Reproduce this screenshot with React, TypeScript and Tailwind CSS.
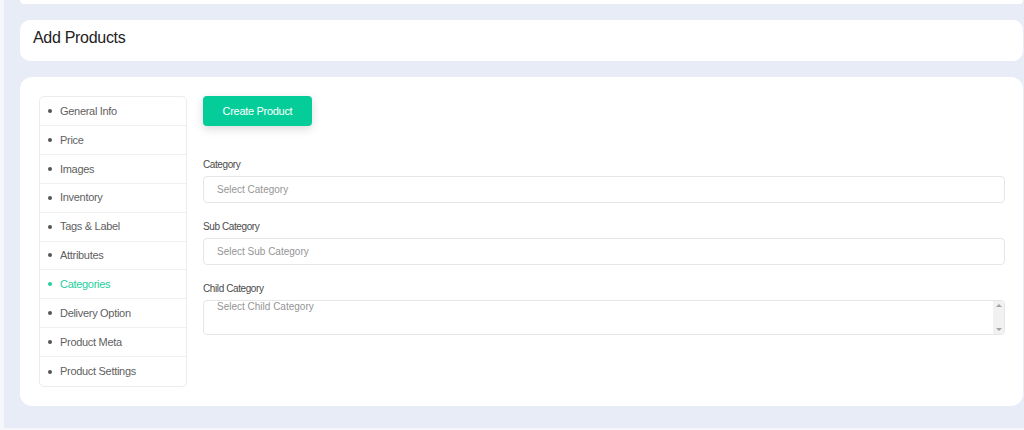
import React from "react";

const items = [
  "General Info",
  "Price",
  "Images",
  "Inventory",
  "Tags & Label",
  "Attributes",
  "Categories",
  "Delivery Option",
  "Product Meta",
  "Product Settings",
];

export default function App() {
  return (
    <div
      className="w-[1024px] h-[430px] overflow-hidden bg-[#f6f7fb]"
      style={{ fontFamily: '"Liberation Sans", Arial, sans-serif' }}
    >
      <div className="ml-[4px] h-[428px] bg-[#e8ecf7] pl-[16px] pr-[1px] flex flex-col gap-[16px]">
        <div className="h-[4px] bg-white rounded-b-[10px]" />
        <div className="h-[41px] bg-white rounded-[10px] flex items-center px-[13px] pb-[5px]">
          <h1 className="text-[16px] text-[#222] tracking-[-0.3px]">Add Products</h1>
        </div>
        <div className="h-[329px] bg-white rounded-[12px] pt-[19px] pl-[19px] pr-[18px] flex gap-[16px]">
          <ul className="w-[148px] h-[291px] border border-[#ececec] rounded-[5px] flex flex-col">
            {items.map((it, i) => {
              const active = it === "Categories";
              return (
                <li
                  key={it}
                  className={`h-[29px] flex items-center pl-[8px] text-[11px] tracking-[-0.3px] ${
                    i < items.length - 1 ? "border-b border-[#f0f0f0]" : ""
                  } ${active ? "text-[#22cf9d]" : "text-[#5f5f5f]"}`}
                >
                  <span
                    className={`w-[4px] h-[4px] rounded-full mr-[8px] ${
                      active ? "bg-[#22cf9d]" : "bg-[#555]"
                    }`}
                  />
                  {it}
                </li>
              );
            })}
          </ul>
          <div className="flex-1 flex flex-col">
            <div>
              <button className="w-[109px] h-[30px] rounded-[4px] bg-[#05cd99] text-white text-[11px] tracking-[-0.3px] shadow-[0_3px_10px_rgba(0,0,0,0.15)]">
                Create Product
              </button>
            </div>
            <label className="mt-[33px] text-[10px] tracking-[-0.4px] text-[#4a4a4a] leading-[12px]">Category</label>
            <div className="mt-[5px] h-[27px] border border-[#e6e6e6] rounded-[4px] flex items-center pl-[13px] text-[10px] text-[#959595]">
              Select Category
            </div>
            <label className="mt-[18px] text-[10px] tracking-[-0.4px] text-[#4a4a4a] leading-[12px]">Sub Category</label>
            <div className="mt-[5px] h-[27px] border border-[#e6e6e6] rounded-[4px] flex items-center pl-[13px] text-[10px] text-[#959595]">
              Select Sub Category
            </div>
            <label className="mt-[18px] text-[10px] tracking-[-0.4px] text-[#4a4a4a] leading-[12px]">Child Category</label>
            <div className="mt-[5px] h-[35px] border border-[#e6e6e6] rounded-[4px] flex">
              <div className="flex-1 pl-[13px] text-[10px] text-[#959595] leading-[12px]">
                Select Child Category
              </div>
              <div className="w-[11px] bg-[#f1f1f1] flex flex-col justify-between items-center py-[3px] rounded-r-[4px]">
                <span className="w-0 h-0 border-l-[3px] border-r-[3px] border-b-[3px] border-l-transparent border-r-transparent border-b-[#a3a3a3]" />
                <span className="w-0 h-0 border-l-[3px] border-r-[3px] border-t-[3px] border-l-transparent border-r-transparent border-t-[#a3a3a3]" />
              </div>
            </div>
          </div>
        </div>
      </div>
    </div>
  );
}
